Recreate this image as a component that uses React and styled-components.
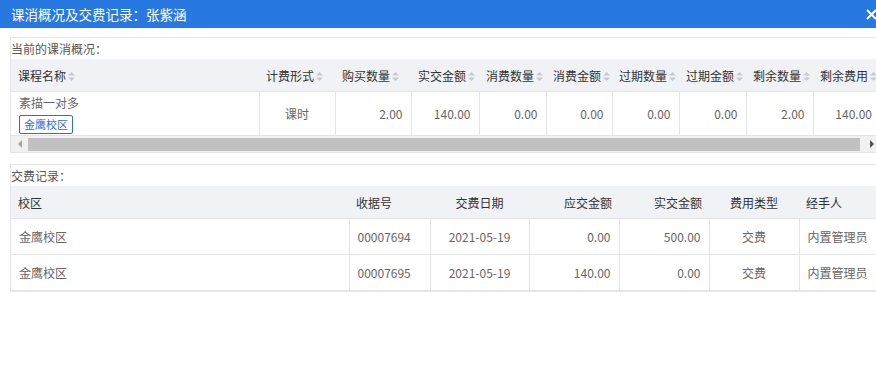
import React from 'react'
import styled, { createGlobalStyle } from 'styled-components'

const GlobalStyle = createGlobalStyle`
  body {
    margin: 0;
    overflow: hidden;
    background: #fff;
    font-family: "Noto Sans CJK SC", "Noto Sans", sans-serif;
  }
`

const Dialog = styled.div`
  width: 890px;
  background: #fff;
`

const TitleBar = styled.div`
  height: 28px;
  background: #2878e2;
  color: #fff;
  display: flex;
  align-items: center;
  justify-content: space-between;
  padding: 0 0 0 11px;
  font-size: 13.5px;
`

const Close = styled.div`
  width: 24px;
  height: 28px;
  display: flex;
  align-items: center;
  padding-left: 2px;
`

const Body = styled.div`
  padding: 9px 10px 0 10px;
`

const Panel = styled.div`
  border: 1px solid #e6e6e6;
  border-right: none;
  margin-bottom: 11px;
`

const Caption = styled.div`
  height: 21px;
  line-height: 21px;
  font-size: 12px;
  color: #555;
`

const Clip = styled.div`
  overflow: hidden;
`

const Table = styled.table`
  border-collapse: collapse;
  table-layout: fixed;
  width: 869px;
  font-size: 12px;
`

const Th = styled.th`
  height: 32px;
  padding: 0 7px;
  background: #f0f2f6;
  color: #333;
  font-weight: normal;
  text-align: ${p => p.align || 'left'};
  white-space: nowrap;
  overflow: hidden;
  border-bottom: 1px solid #e4e4e4;
`

const Td = styled.td`
  height: ${p => p.h || 35}px;
  padding: 0 8px;
  color: #666;
  text-align: ${p => p.align || 'left'};
  vertical-align: middle;
  white-space: nowrap;
  border-bottom: 1px solid #e4e4e4;
  & + & {
    border-left: 1px solid #e4e4e4;
  }
`

const CourseCell = styled(Td)`
  vertical-align: top;
  padding-top: 1px;
  padding-bottom: 0;
`

const CourseName = styled.div`
  line-height: 20px;
`

const Tag = styled.span`
  display: inline-block;
  margin-top: 2px;
  border: 1px solid #2d6fd5;
  border-radius: 2px;
  color: #2d6fd5;
  font-size: 11px;
  line-height: 17px;
  padding: 0 4px;
  vertical-align: top;
`

const SortIcon = () => (
  <svg width="7" height="11" viewBox="0 0 7 11" style={{ marginLeft: 2, verticalAlign: -1 }}>
    <polygon points="0,4.5 3.5,1 7,4.5" fill="#c6c9cf" />
    <polygon points="0,6.5 3.5,10 7,6.5" fill="#c6c9cf" />
  </svg>
)

const ScrollBar = styled.div`
  height: 16px;
  background: #f1f1f1;
  display: flex;
  align-items: center;
`

const ArrowBtn = styled.div`
  width: 17px;
  height: 16px;
  flex: none;
  display: flex;
  align-items: center;
  justify-content: center;
  &::before {
    content: '';
    width: 0;
    height: 0;
    border-top: 4px solid transparent;
    border-bottom: 4px solid transparent;
    ${p => p.dir === 'left'
      ? 'border-right: 4px solid #a3a3a3;'
      : 'border-left: 4px solid #505050;'}
  }
`

const Thumb = styled.div`
  flex: 1;
  height: 13px;
  margin-right: 3px;
  background: #c1c1c1;
`

const courseCols = [248, 76, 76, 68, 67, 66, 67, 67, 67, 67]
const courseHead = ['课程名称', '计费形式', '购买数量', '实交金额', '消费数量', '消费金额', '过期数量', '过期金额', '剩余数量', '剩余费用']
const courseRow = ['2.00', '140.00', '0.00', '0.00', '0.00', '0.00', '2.00', '140.00']

const payCols = [338, 81, 99, 90, 90, 90, 81]
const payHead = [
  ['校区', 'left'], ['收据号', 'left'], ['交费日期', 'center'], ['应交金额', 'right'],
  ['实交金额', 'right'], ['费用类型', 'center'], ['经手人', 'left'],
]
const payRows = [
  ['金鹰校区', '00007694', '2021-05-19', '0.00', '500.00', '交费', '内置管理员'],
  ['金鹰校区', '00007695', '2021-05-19', '140.00', '0.00', '交费', '内置管理员'],
]

export default function App() {
  return (
    <Dialog>
      <GlobalStyle />
      <TitleBar>
        <span>课消概况及交费记录：张紫涵</span>
        <Close>
          <svg width="11" height="11" viewBox="0 0 11 11">
            <path d="M1 1 L10 10 M10 1 L1 10" stroke="#fff" strokeWidth="2" />
          </svg>
        </Close>
      </TitleBar>
      <Body>
        <Panel>
          <Caption>当前的课消概况：</Caption>
          <Clip>
            <Table>
              <colgroup>
                {courseCols.map((w, i) => <col key={i} style={{ width: w }} />)}
              </colgroup>
              <thead>
                <tr>
                  {courseHead.map((h, i) => (
                    <Th key={i}>{h}<SortIcon /></Th>
                  ))}
                </tr>
              </thead>
              <tbody>
                <tr>
                  <CourseCell h={42}>
                    <CourseName>素描一对多</CourseName>
                    <Tag>金鹰校区</Tag>
                  </CourseCell>
                  <Td h={42} align="center">课时</Td>
                  {courseRow.map((v, i) => <Td key={i} h={42} align="right">{v}</Td>)}
                </tr>
              </tbody>
            </Table>
          </Clip>
          <ScrollBar>
            <ArrowBtn dir="left" />
            <Thumb />
            <ArrowBtn dir="right" />
          </ScrollBar>
        </Panel>
        <Panel>
          <Caption>交费记录：</Caption>
          <Clip>
            <Table>
              <colgroup>
                {payCols.map((w, i) => <col key={i} style={{ width: w }} />)}
              </colgroup>
              <thead>
                <tr>
                  {payHead.map(([h, a], i) => <Th key={i} align={a}>{h}</Th>)}
                </tr>
              </thead>
              <tbody>
                {payRows.map((r, ri) => (
                  <tr key={ri}>
                    {r.map((v, i) => <Td key={i} align={payHead[i][1]}>{v}</Td>)}
                  </tr>
                ))}
              </tbody>
            </Table>
          </Clip>
        </Panel>
      </Body>
    </Dialog>
  )
}
